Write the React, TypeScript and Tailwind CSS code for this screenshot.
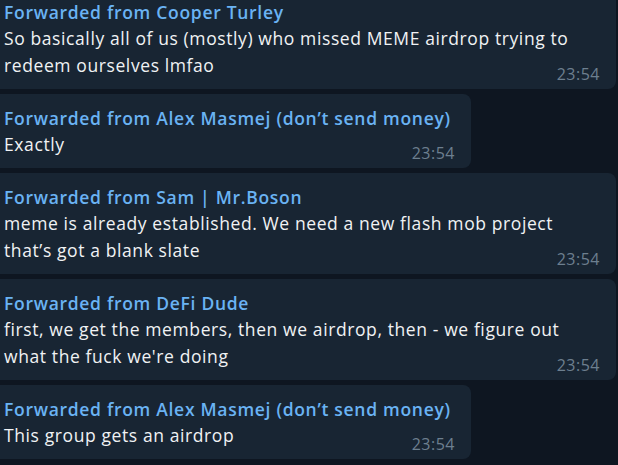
import React from "react";

type Msg = { from: string; lines: string[]; wide: boolean };

const msgs: Msg[] = [
  {
    from: "Cooper Turley",
    lines: [
      "So basically all of us (mostly) who missed MEME airdrop trying to",
      "redeem ourselves lmfao",
    ],
    wide: true,
  },
  { from: "Alex Masmej (don’t send money)", lines: ["Exactly"], wide: false },
  {
    from: "Sam | Mr.Boson",
    lines: [
      "meme is already established. We need a new flash mob project",
      "that’s got a blank slate",
    ],
    wide: true,
  },
  {
    from: "DeFi Dude",
    lines: [
      "first, we get the members, then we airdrop, then - we figure out",
      "what the fuck we're doing",
    ],
    wide: true,
  },
  { from: "Alex Masmej (don’t send money)", lines: ["This group gets an airdrop"], wide: false },
];

function Bubble({ m }: { m: Msg }) {
  return (
    <div
      className={
        (m.wide ? "w-[624px]" : "w-[479px]") +
        " ml-[-8px] rounded-[8px] bg-[#182533] pl-[12px] pr-[16px] pt-[11px] pb-[7px]"
      }
    >
      <div className="whitespace-nowrap text-[17.5px] leading-[26px] tracking-[0.7px] font-semibold text-[#6ab3f3]">
        Forwarded from {m.from}
      </div>
      {m.lines.map((l, i) => (
        <div
          key={i}
          className="whitespace-nowrap text-[17.5px] leading-[27px] tracking-[0.6px] text-[#f0f2f4]"
        >
          {l}
        </div>
      ))}
      <div className="mt-[-13px] text-right text-[16px] leading-[16px] tracking-[0.5px] text-[#6d7f8f]">
        23:54
      </div>
    </div>
  );
}

export default function App() {
  return (
    <div
      className="h-[465px] w-[618px] overflow-hidden bg-[#0e1621]"
      style={{ fontFamily: '"Open Sans", "Noto Sans", sans-serif' }}
    >
      <div className="mt-[-12px] flex flex-col gap-[5px]">
        {msgs.map((m, i) => (
          <Bubble key={i} m={m} />
        ))}
      </div>
    </div>
  );
}
